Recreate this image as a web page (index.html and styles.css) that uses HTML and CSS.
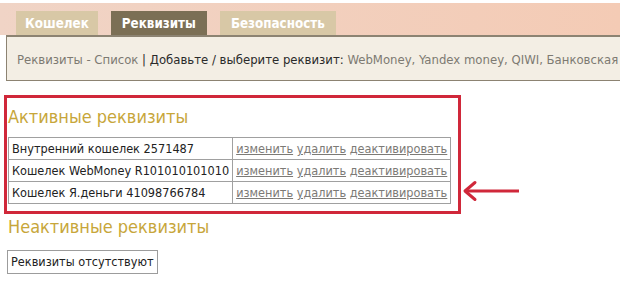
FILE: index.html
```html
<!DOCTYPE html>
<html lang="ru">
<head>
<meta charset="utf-8">
<link rel="stylesheet" href="styles.css">
</head>
<body>
<div class="topbar">
  <nav class="tabs">
    <a class="tab">Кошелек</a>
    <a class="tab active">Реквизиты</a>
    <a class="tab">Безопасность</a>
  </nav>
</div>
<div class="panel">
  <span class="muted">Реквизиты - Список</span> <span class="dark">| Добавьте / выберите реквизит:</span>
  <span class="muted">WebMoney, Yandex money, QIWI, Банковская</span>
</div>
<div class="content">
  <div class="highlight">
    <h2 class="heading">Активные реквизиты</h2>
    <table class="list">
      <tr><td>Внутренний кошелек 2571487</td><td><a>изменить</a> <a>удалить</a> <a>деактивировать</a></td></tr>
      <tr><td>Кошелек WebMoney R101010101010</td><td><a>изменить</a> <a>удалить</a> <a>деактивировать</a></td></tr>
      <tr><td>Кошелек Я.деньги 41098766784</td><td><a>изменить</a> <a>удалить</a> <a>деактивировать</a></td></tr>
    </table>
    <svg class="arrow" width="58" height="22" viewBox="0 0 58 22">
      <path d="M4 11 H57" stroke="#d0283a" stroke-width="3" fill="none"/>
      <path d="M13 2.5 L3 11 L13 19.5" stroke="#d0283a" stroke-width="3" fill="none" stroke-linecap="round" stroke-linejoin="round"/>
    </svg>
  </div>
  <h2 class="heading inactive">Неактивные реквизиты</h2>
  <div class="empty">Реквизиты отсутствуют</div>
</div>
</body>
</html>
```
FILE: styles.css
```css
html, body {
  margin: 0;
  padding: 0;
  background: #fff;
  font-family: "DejaVu Sans Condensed", "DejaVu Sans", Verdana, sans-serif;
  font-size: 12.5px;
  color: #222;
  overflow: hidden;
}
.topbar {
  margin-top: 3px;
  height: 32px;
  background: linear-gradient(to right, #f0d4c6, #f4cbb5);
  display: flex;
  align-items: flex-end;
}
.tabs {
  display: flex;
  gap: 13px;
  padding-left: 16px;
}
.tab {
  display: block;
  height: 24px;
  line-height: 25px;
  padding: 0 11px;
  background: #d8c8a6;
  color: #fff;
  font-weight: bold;
  font-size: 13.3px;
}
.tab:first-child {
  padding: 0 9px;
}
.tab.active {
  background: #7b6f55;
}
.panel {
  margin-left: 6px;
  margin-right: -200px;
  background: #f3eee4;
  border: 1px solid #8c8372;
  border-top: 2px solid #8c8372;
  box-sizing: border-box;
  height: 46px;
  padding: 15px 0 0 10px;
  white-space: nowrap;
  font-size: 13px;
}
.muted { color: #7d7a72; }
.dark { color: #2a2a2a; }
.content {
  padding: 14px 0 0 4px;
}
.highlight {
  position: relative;
  width: 450px;
  height: 113px;
  border: 3px solid #d0283a;
  padding: 0 0 0 1px;
}
.heading {
  margin: 0;
  font-weight: normal;
  font-size: 18px;
  color: #c7a63a;
  line-height: 22px;
  padding-top: 8px;
}
.list {
  margin-top: 9px;
  border-collapse: collapse;
  font-size: 12.6px;
}
.list td {
  border: 1px solid #a0a0a0;
  padding: 0 3px;
  height: 21px;
  white-space: nowrap;
}
.list a {
  color: #7c7a76;
  text-decoration: underline;
}
.arrow {
  position: absolute;
  left: 455px;
  top: 82px;
}
.inactive {
  padding: 2px 0 0 4px;
  margin-top: 0;
}
.empty {
  display: inline-block;
  margin: 12px 0 0 3px;
  border: 1px solid #9c9c9c;
  padding: 3px 3px 4px;
  font-size: 12.6px;
}
```
